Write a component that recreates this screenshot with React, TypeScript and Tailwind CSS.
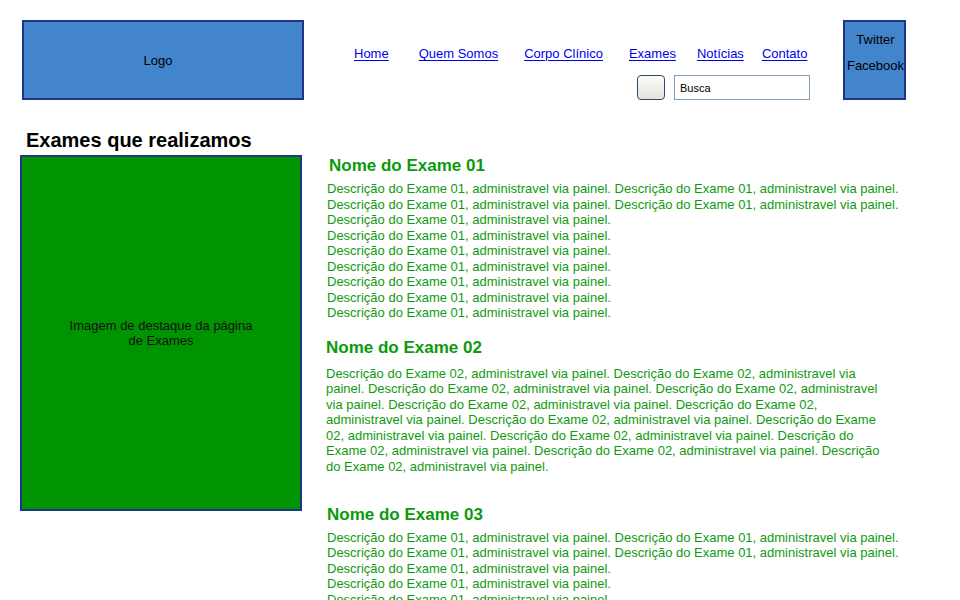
import React from 'react';

const linha01 = 'Descrição do Exame 01, administravel via painel.';
const linha02 = 'Descrição do Exame 02, administravel via painel.';

function NavLink({ label, className }: { label: string; className: string }) {
  return (
    <a href="#" className={`text-[13px] leading-[15px] text-[#0000ee] underline underline-offset-[2px] ${className}`}>
      {label}
    </a>
  );
}

function Descricao01() {
  return (
    <p className="text-[13px] leading-[15.5px] text-[#109a10]">
      {linha01} {linha01}
      <br />
      {linha01} {linha01}
      <br />
      {linha01}
      <br />
      {linha01}
      <br />
      {linha01}
      <br />
      {linha01}
      <br />
      {linha01}
      <br />
      {linha01}
      <br />
      {linha01}
    </p>
  );
}

export default function App() {
  return (
    <div className="w-[960px] h-[600px] overflow-hidden bg-white font-['Liberation_Sans',Arial,sans-serif] text-black">
      {/* Cabeçalho */}
      <header className="flex pt-[20px] pl-[22px]">
        <div className="w-[282px] h-[80px] border-2 border-[#1f3586] bg-[#4385cc] flex items-center justify-center pr-[10px] pt-[1px] text-[13px]">
          Logo
        </div>

        <div className="w-[539px] flex flex-col">
          <nav className="flex mt-[26px] ml-[50px]">
            <NavLink label="Home" className="" />
            <NavLink label="Quem Somos" className="ml-[30px]" />
            <NavLink label="Corpo Clínico" className="ml-[26px]" />
            <NavLink label="Exames" className="ml-[26px]" />
            <NavLink label="Notícias" className="ml-[21px]" />
            <NavLink label="Contato" className="ml-[18px]" />
          </nav>
          <div className="flex justify-end items-center gap-[9px] mt-[14px] pr-[33px]">
            <button className="w-[28px] h-[25px] rounded-[4px] border border-[#2c4a6b] bg-gradient-to-b from-[#fbfbf9] to-[#e4e3dc]" />
            <input
              defaultValue="Busca"
              className="w-[136px] h-[25px] border border-[#7f9db9] px-[5px] text-[11px] text-black outline-none"
            />
          </div>
        </div>

        <div className="w-[63px] h-[80px] border-2 border-[#1f3586] bg-[#4385cc] flex flex-col items-center pt-[10px] pl-[2px] text-[13px] leading-[15px]">
          <span>Twitter</span>
          <span className="mt-[11px] whitespace-nowrap">Facebook</span>
        </div>
      </header>

      {/* Conteúdo */}
      <main className="flex mt-[28px]">
        <section className="ml-[20px] w-[282px] shrink-0">
          <h1 className="pl-[6px] text-[20px] leading-[24px] font-bold">Exames que realizamos</h1>
          <div className="mt-[3px] h-[356px] border-2 border-[#1f3586] bg-[#009400] flex items-center justify-center">
            <p className="w-[200px] text-center text-[13px] leading-[15px] text-[#101010]">
              Imagem de destaque da página de Exames
            </p>
          </div>
        </section>

        <section className="ml-[24px] flex flex-col">
          <article className="mt-[28px]">
            <h2 className="pl-[3px] text-[17px] leading-[20px] font-bold text-[#0b9a0b]">Nome do Exame 01</h2>
            <div className="mt-[5px] pl-[1px]">
              <Descricao01 />
            </div>
          </article>

          <article className="mt-[17px]">
            <h2 className="text-[17px] leading-[20px] font-bold text-[#0b9a0b]">Nome do Exame 02</h2>
            <p className="mt-[8px] w-[560px] text-[13px] leading-[15.5px] text-[#109a10]">
              {Array.from({ length: 12 }, () => linha02).join(' ')}
            </p>
          </article>

          <article className="mt-[30.5px] pl-[1px]">
            <h2 className="text-[17px] leading-[20px] font-bold text-[#0b9a0b]">Nome do Exame 03</h2>
            <div className="mt-[5px]">
              <Descricao01 />
            </div>
          </article>
        </section>
      </main>
    </div>
  );
}
